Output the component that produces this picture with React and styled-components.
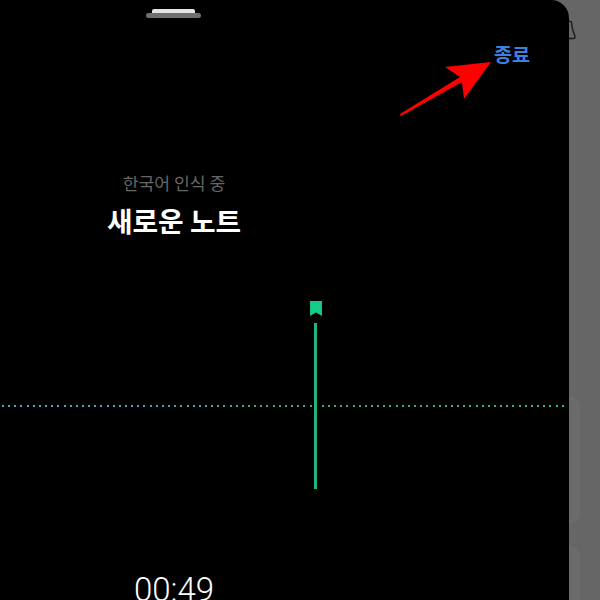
import React from "react";
import styled, { createGlobalStyle } from "styled-components";

const Global = createGlobalStyle`
  html, body { margin: 0; padding: 0; background: #666; }
  body { width: 600px; height: 600px; overflow: hidden; font-family: "Noto Sans CJK KR", "Liberation Sans", sans-serif; }
`;
const Stage = styled.div`
  display: flex;
  width: 600px;
  height: 600px;
  overflow: hidden;
  background: #666;
`;
const Phone = styled.main`
  position: relative;
  display: flex;
  flex-direction: column;
  flex: 0 0 569px;
  height: 600px;
  background: #000;
  border-top-right-radius: 18px;
  overflow: hidden;
`;
const Side = styled.aside`
  display: flex;
  flex-direction: column;
  flex: 1;
  height: 600px;
  box-sizing: border-box;
  padding-top: 18px;
  background: #666;
  overflow: hidden;
`;
const BellEdge = styled.svg`
  flex: none;
`;
const SideCards = styled.div`
  display: flex;
  flex: none;
  flex-direction: column;
  gap: 23px;
  padding-top: 355px;
`;
const SideCard = styled.div`
  flex: none;
  width: 11px;
  height: ${p => p.$h}px;
  background: #6b6b6b;
  border-radius: 0 10px 10px 0;
`;
const TopBar = styled.div`
  display: flex;
  align-items: flex-start;
  height: 71px;
  padding-top: 9px;
  box-sizing: border-box;
`;
const HandleSlot = styled.div`
  display: flex;
  flex-direction: column;
  align-items: center;
  width: 347px;
  margin-right: 1px;
`;
const HandleTop = styled.div`
  width: 43px;
  height: 4px;
  background: #e4e4e4;
  border-radius: 2px 2px 0 0;
`;
const HandleBar = styled.div`
  width: 55px;
  height: 5px;
  background: #6f6f6f;
  border-radius: 3px;
`;
const EndButton = styled.button`
  margin: 31px 0 0 146px;
  padding: 0;
  border: 0;
  background: none;
  color: #3b82e0;
  font: 700 19.6px/28px "Noto Sans CJK KR", sans-serif;
`;
const Arrow = styled.svg`
  position: absolute;
  left: 396px;
  top: 55px;
`;
const Heading = styled.header`
  display: flex;
  flex-direction: column;
  align-items: center;
  width: 348px;
  padding-top: 103px;
`;
const Status = styled.div`
  color: #666;
  font-size: 17.2px;
  line-height: 24px;
`;
const Title = styled.h1`
  margin: 6px 0 0;
  color: #fff;
  font-size: 27.8px;
  line-height: 38px;
  font-weight: 700;
`;
const Wave = styled.section`
  position: relative;
  display: flex;
  flex-direction: column;
  align-items: flex-start;
  gap: 7px;
  height: 188px;
  margin-top: 62px;
  padding-left: 310px;
`;
const Dots = styled.svg`
  position: absolute;
  left: 0;
  top: 104px;
`;
const Needle = styled.div`
  width: 3px;
  height: 167px;
  margin-left: 4px;
  background: #1fb57f;
  z-index: 1;
`;
const Time = styled.div`
  width: 348px;
  margin-top: 82px;
  text-align: center;
  color: #fff;
  font: 300 33px/38px Roboto, sans-serif;
`;

const dotXs = Array.from({ length: 92 }, (_, i) => Math.round(2 + i * 6.15)).filter(x => x < 311 || x > 320);

export default function App() {
  return (
    <Stage>
      <Global />
      <Phone>
        <TopBar>
          <HandleSlot>
            <HandleTop />
            <HandleBar />
          </HandleSlot>
          <EndButton>종료</EndButton>
        </TopBar>
        <Arrow width="100" height="64" viewBox="0 0 100 64">
          <path d="M4 59 L64 22 L49 12 L95 7 L68 44 L66 27 L5 61 Z" fill="#ff0000" />
        </Arrow>
        <Heading>
          <Status>한국어 인식 중</Status>
          <Title>새로운 노트</Title>
        </Heading>
        <Wave>
          <Dots width="569" height="2" viewBox="0 0 569 2">
            <defs>
              <linearGradient id="dotFill" x1="0" x2="569" y1="0" y2="0" gradientUnits="userSpaceOnUse">
                <stop offset="0" stopColor="#4fa8d0" />
                <stop offset="0.55" stopColor="#47a08e" />
                <stop offset="1" stopColor="#3fb088" />
              </linearGradient>
            </defs>
            {dotXs.map(x => <rect key={x} x={x} y="0" width="2" height="2" fill="url(#dotFill)" />)}
          </Dots>
          <svg width="12" height="15" viewBox="0 0 12 15">
            <path d="M0 0H12V15L6 11.5L0 15Z" fill="#14cc85" />
          </svg>
          <Needle />
        </Wave>
        <Time>00:49</Time>
      </Phone>
      <Side>
        <BellEdge width="10" height="24" viewBox="0 0 10 24">
          <path d="M0 3L2.5 4L3.5 11L6 18.5C6.3 20 5.5 20.5 4.5 20.5H0" fill="none" stroke="#1c1c1c" strokeWidth="1.4" />
        </BellEdge>
        <SideCards>
          <SideCard $h={126} />
          <SideCard $h={60} />
        </SideCards>
      </Side>
    </Stage>
  );
}
